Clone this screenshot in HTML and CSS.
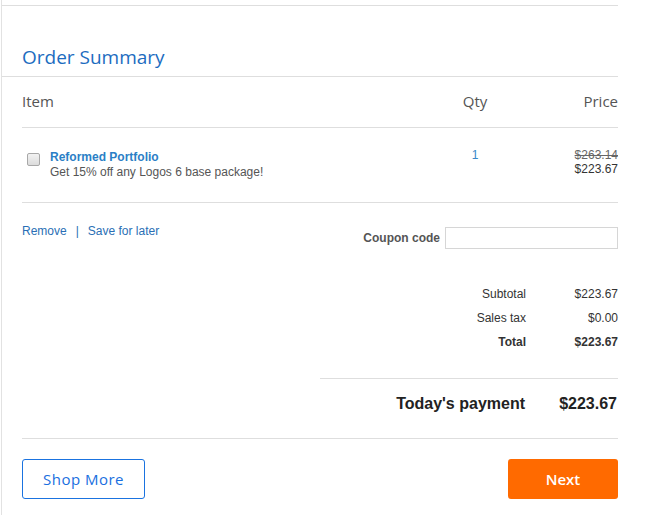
FILE: index.html
```html
<!DOCTYPE html>
<html>
<head>
<meta charset="utf-8">
<link rel="stylesheet" href="styles.css">
</head>
<body>
<div class="frame">
  <div class="top-rule"></div>
  <div class="header"><h1 class="title">Order Summary</h1></div>
  <div class="content">
    <div class="cols">
      <div class="col-item">Item</div>
      <div class="col-qty">Qty</div>
      <div class="col-price">Price</div>
    </div>
    <div class="item-row">
      <div class="item-info">
        <span class="check"></span>
        <div class="item-text">
          <div class="item-name">Reformed Portfolio</div>
          <div class="item-desc">Get 15% off any Logos 6 base package!</div>
        </div>
      </div>
      <div class="qty">1</div>
      <div class="prices">
        <div class="old-price">$263.14</div>
        <div class="new-price">$223.67</div>
      </div>
    </div>
    <div class="actions">
      <div class="links"><a class="link">Remove</a><span class="sep">|</span><a class="link">Save for later</a></div>
      <div class="coupon"><label class="coupon-label">Coupon code</label><span class="coupon-input"></span></div>
    </div>
    <div class="totals">
      <div class="t-label">Subtotal</div><div class="t-value">$223.67</div>
      <div class="t-label">Sales tax</div><div class="t-value">$0.00</div>
      <div class="t-label bold">Total</div><div class="t-value bold">$223.67</div>
    </div>
    <div class="payment">
      <div class="p-label">Today's payment</div><div class="p-value">$223.67</div>
    </div>
    <div class="buttons">
      <a class="btn btn-outline">Shop More</a>
      <a class="btn btn-primary">Next</a>
    </div>
  </div>
</div>
</body>
</html>
```
FILE: styles.css
```css
* { box-sizing: border-box; }
html, body { margin: 0; padding: 0; background: #fff; }
body { font-family: "Liberation Sans", Arial, sans-serif; font-size: 12px; color: #444; }
.frame {
  margin-left: 1px;
  width: 617px;
  min-height: 515px;
  border-left: 1px solid #e2e2e2;
  padding-top: 5px;
}
.top-rule { border-top: 1px solid #dedede; }
.header {
  height: 71px;
  border-bottom: 1px solid #dedede;
  display: flex;
  align-items: flex-end;
  padding-left: 20px;
  padding-bottom: 8px;
}
.title {
  margin: 0;
  font-family: "Open Sans", sans-serif;
  font-weight: 400;
  font-size: 19px;
  line-height: 22px;
  color: #1c6cbf;
}
.content { margin-left: 20px; }
.cols {
  display: grid;
  grid-template-columns: 1fr 100px 93px;
  height: 51px;
  align-items: center;
  border-bottom: 1px solid #dedede;
  font-family: "Open Sans", sans-serif;
  font-size: 15px;
  color: #555;
  padding-bottom: 2px;
}
.col-qty { text-align: center; }
.col-price { text-align: right; }
.item-row {
  display: grid;
  grid-template-columns: 1fr 100px 93px;
  height: 75px;
  border-bottom: 1px solid #dedede;
  padding-top: 20px;
}
.item-info { display: flex; gap: 10px; padding-left: 5px; padding-top: 2px; }
.check {
  width: 13px; height: 13px; margin-top: 3px;
  border: 1px solid #a8a8a8; border-radius: 2px;
  background: linear-gradient(#f2f2f2, #dcdcdc);
}
.item-name { font-weight: bold; color: #2b7fc6; line-height: 15px; }
.item-desc { color: #555; line-height: 15px; }
.qty { text-align: center; color: #3a87c8; line-height: 14px; }
.prices { text-align: right; line-height: 14px; }
.old-price { text-decoration: line-through; color: #666; }
.new-price { color: #333; }
.actions {
  display: flex;
  justify-content: space-between;
  height: 79px;
  padding-top: 21px;
}
.links { color: #2a6fb5; line-height: 14px; }
.link { color: #2a6fb5; }
.sep { margin: 0 9px; color: #2a6fb5; }
.coupon { display: flex; align-items: center; height: 22px; margin-top: 3px; gap: 5px; }
.coupon-label { font-weight: bold; color: #555; }
.coupon-input { width: 173px; height: 22px; border: 1px solid #d6d6d6; }
.totals {
  display: grid;
  grid-template-columns: 1fr 92px;
  grid-auto-rows: 24px;
  align-items: center;
  align-content: start;
  margin-left: 298px;
  height: 97px;
  border-bottom: 1px solid #dedede;
  text-align: right;
  color: #333;
}
.bold { font-weight: bold; }
.payment {
  display: grid;
  grid-template-columns: 1fr 92px;
  height: 60px;
  align-items: center;
  border-bottom: 1px solid #dedede;
  font-weight: bold;
  font-size: 16px;
  color: #222;
  text-align: right;
  padding-right: 1px;
  padding-bottom: 10px;
}
.buttons {
  display: flex;
  justify-content: space-between;
  padding-top: 20px;
}
.btn {
  display: flex; align-items: center; justify-content: center;
  height: 40px;
  border-radius: 3px;
  font-family: "Open Sans", sans-serif;
  font-size: 15px;
}
.btn-outline { width: 123px; border: 1px solid #1a73e0; color: #1a6fe0; letter-spacing: 0.5px; }
.btn-primary { width: 110px; background: #ff6a00; color: #fff; font-weight: 600; }
```
